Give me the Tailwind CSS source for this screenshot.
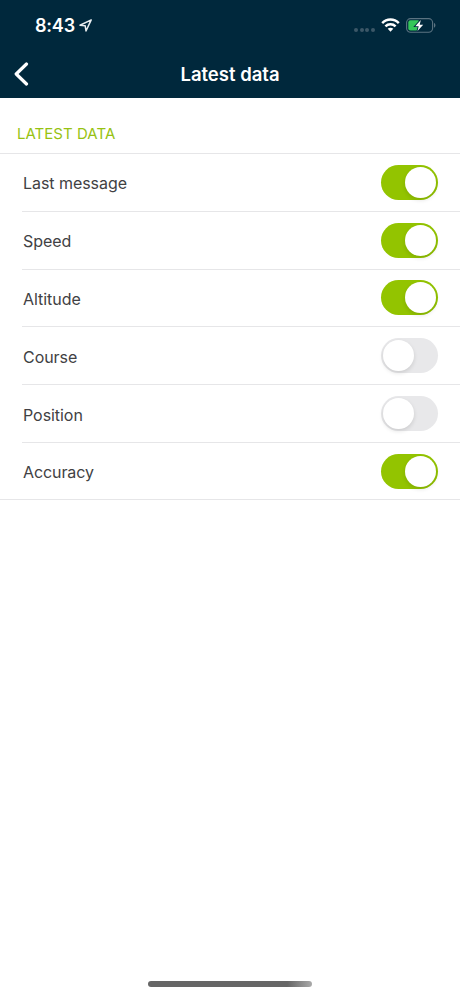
<!DOCTYPE html>
<html lang="en">
<head>
    <meta charset="UTF-8">
    <meta name="viewport" content="width=device-width, initial-scale=1.0">
    <title>Latest data</title>
    <script src="https://cdn.jsdelivr.net/npm/@tailwindcss/browser@4"></script>
    <style>
        body {
            font-family: 'Inter', sans-serif;
        }
    </style>
</head>
<body class="bg-white h-screen flex flex-col overflow-hidden text-[#414143]">
    <header class="h-[98px] shrink-0 bg-[#00283c] text-white">
        <!-- Status bar -->
        <div class="h-[50px] pl-[35px] pr-[24px] flex items-center">
            <span class="mt-[2px] text-[18px] font-semibold leading-none tracking-[-0.2px]">8:43</span>
            <svg class="ml-[4px] w-[13px] h-[13px]" viewBox="0 0 13 13" fill="none" stroke="#e8edf0" stroke-width="1.5" stroke-linejoin="round">
                <path d="M12.2 0.9 L1 6.2 L6.2 6.8 L7 12 Z"/>
            </svg>
            <div class="ml-auto mt-[9px] flex gap-[1.7px]">
                <span class="size-[4px] rounded-full bg-[#3b5767]"></span>
                <span class="size-[4px] rounded-full bg-[#3b5767]"></span>
                <span class="size-[4px] rounded-full bg-[#3b5767]"></span>
                <span class="size-[4px] rounded-full bg-[#3b5767]"></span>
            </div>
            <svg class="ml-[6px] w-[19px] h-[14px]" viewBox="0 0 19 14" fill="none" stroke="white" stroke-width="2.5">
                <path d="M1.2 5.1 C5.8 0.4 13.2 0.4 17.8 5.1"/>
                <path d="M4.4 8.4 C7.2 5.6 11.8 5.6 14.6 8.4"/>
                <path d="M9.5 13.8 L6.7 10.8 C8.3 9.4 10.7 9.4 12.3 10.8 Z" fill="white" stroke="none"/>
            </svg>
            <svg class="ml-[6px] w-[30px] h-[15px]" viewBox="0 0 30 15">
                <rect x="0.6" y="0.6" width="26" height="13.6" rx="4" fill="none" stroke="#5b7381" stroke-width="1.1"/>
                <path d="M28 5.1 C29.9 5.8 29.9 9.1 28 9.8 Z" fill="#5b7381"/>
                <rect x="2.3" y="2.3" width="11.4" height="10.2" rx="2.2" fill="#35c759"/>
                <path d="M14.8 2 L9.3 8.2 H12.7 L11.5 13 L17.2 6.7 H13.7 Z" fill="white" stroke="#00283c" stroke-width="1.8" paint-order="stroke"/>
            </svg>
        </div>
        <!-- Title bar -->
        <div class="h-[48px] grid grid-cols-[1fr_auto_1fr] items-center">
            <svg class="ml-[14px] w-[15px] h-[24px]" viewBox="0 0 15 24" fill="none" stroke="white" stroke-width="3.2" stroke-linecap="round" stroke-linejoin="round">
                <path d="M12.5 2 L2.2 12 L12.5 22"/>
            </svg>
            <h1 class="text-[18.5px] font-semibold leading-none">Latest data</h1>
        </div>
    </header>

    <main class="flex-1">
        <h2 class="h-[55px] pl-[17px] pt-[26px] text-[15px] leading-[20px] tracking-[0.03px] text-[#97c212]">LATEST DATA</h2>
        <ul class="border-y border-[#e6e6e8] pl-[22px]">
            <li class="h-[57.8px] pl-px pr-[22px] flex items-center justify-between border-b border-[#e6e6e8]">
                <span class="text-[16px] mt-[2px] tracking-[-0.05px]">Last message</span>
                <span class="w-[57px] h-[35px] rounded-full bg-[#93c400] flex items-center justify-end px-[2px]"><span class="size-[31px] rounded-full bg-white shadow-[0_2px_4px_rgba(0,0,0,0.12)]"></span></span>
            </li>
            <li class="h-[57.8px] pl-px pr-[22px] flex items-center justify-between border-b border-[#e6e6e8]">
                <span class="text-[16px] mt-[2px] tracking-[-0.05px]">Speed</span>
                <span class="w-[57px] h-[35px] rounded-full bg-[#93c400] flex items-center justify-end px-[2px]"><span class="size-[31px] rounded-full bg-white shadow-[0_2px_4px_rgba(0,0,0,0.12)]"></span></span>
            </li>
            <li class="h-[57.8px] pl-px pr-[22px] flex items-center justify-between border-b border-[#e6e6e8]">
                <span class="text-[16px] mt-[3px] tracking-[-0.05px]">Altitude</span>
                <span class="w-[57px] h-[35px] rounded-full bg-[#93c400] flex items-center justify-end px-[2px]"><span class="size-[31px] rounded-full bg-white shadow-[0_2px_4px_rgba(0,0,0,0.12)]"></span></span>
            </li>
            <li class="h-[57.8px] pl-px pr-[22px] flex items-center justify-between border-b border-[#e6e6e8]">
                <span class="text-[16px] mt-[3px] tracking-[-0.05px]">Course</span>
                <span class="w-[57px] h-[35px] rounded-full bg-[#e8e8ea] flex items-center px-[2px]"><span class="size-[31px] rounded-full bg-white shadow-[0_2px_4px_rgba(0,0,0,0.12)]"></span></span>
            </li>
            <li class="h-[57.8px] pl-px pr-[22px] flex items-center justify-between border-b border-[#e6e6e8]">
                <span class="text-[16px] mt-[3px] tracking-[-0.05px]">Position</span>
                <span class="w-[57px] h-[35px] rounded-full bg-[#e8e8ea] flex items-center px-[2px]"><span class="size-[31px] rounded-full bg-white shadow-[0_2px_4px_rgba(0,0,0,0.12)]"></span></span>
            </li>
            <li class="h-[56.5px] pl-px pr-[22px] flex items-center justify-between">
                <span class="text-[16px] mt-[2px] tracking-[-0.1px]">Accuracy</span>
                <span class="w-[57px] h-[35px] rounded-full bg-[#93c400] flex items-center justify-end px-[2px]"><span class="size-[31px] rounded-full bg-white shadow-[0_2px_4px_rgba(0,0,0,0.12)]"></span></span>
            </li>
        </ul>
    </main>

    <!-- Home indicator -->
    <footer class="pb-[9px] flex justify-center">
        <div class="w-[164px] h-[6px] rounded-full bg-linear-to-r from-[#666] from-85% to-[#aaa]"></div>
    </footer>
</body>
</html>
